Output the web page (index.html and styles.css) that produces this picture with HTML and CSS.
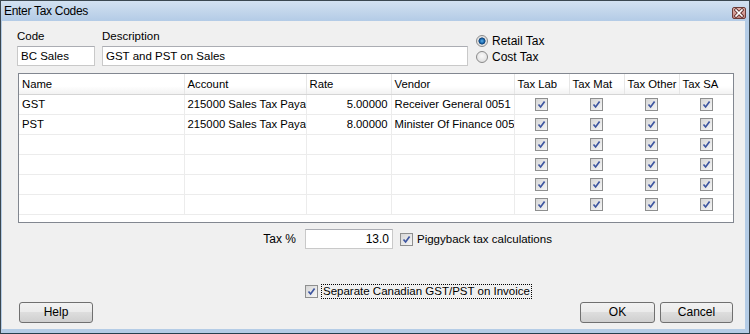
FILE: index.html
```html
<!DOCTYPE html>
<html lang="en">
<head>
    <meta charset="UTF-8">
    <title>Enter Tax Codes</title>
    <link rel="stylesheet" href="styles.css">
</head>
<body>

<div class="window">
    <div class="titlebar">
        <span class="title">Enter Tax Codes</span>
        <span class="close">
            <svg width="12" height="10" viewBox="0 0 12 10">
                <path d="M3 2 L9 8 M9 2 L3 8" stroke="#5a2a28" stroke-width="3.2" stroke-linecap="square"/>
                <path d="M3 2 L9 8 M9 2 L3 8" stroke="#ffffff" stroke-width="1.6" stroke-linecap="square"/>
            </svg>
        </span>
    </div>

    <div class="client">
        <!-- code / description / tax type -->
        <div class="top-row">
            <div class="field code">
                <div class="label">Code</div>
                <div class="input">BC Sales</div>
            </div>
            <div class="field desc">
                <div class="label">Description</div>
                <div class="input">GST and PST on Sales</div>
            </div>
            <div class="radios">
                <div class="radio-line"><span class="radio on"></span>Retail Tax</div>
                <div class="radio-line"><span class="radio"></span>Cost Tax</div>
            </div>
        </div>

        <!-- tax lines -->
        <div class="grid">
            <table>
                <colgroup>
                    <col class="c-name"><col class="c-acct"><col class="c-rate"><col class="c-vend">
                    <col class="c-chk"><col class="c-chk"><col class="c-chk"><col class="c-chk-last">
                </colgroup>
                <tr class="head">
                    <th>Name</th><th>Account</th><th>Rate</th><th>Vendor</th>
                    <th>Tax Lab</th><th>Tax Mat</th><th>Tax Other</th><th>Tax SA</th>
                </tr>
                <tr>
                    <td>GST</td><td>215000 Sales Tax Payable</td><td class="num">5.00000</td><td>Receiver General 0051</td>
                    <td class="cb"><span class="chk"><svg width="11" height="11" viewBox="0 0 11 11"><path d="M2.5 5.5 L4.6 8 L8.6 2.6" fill="none" stroke="#3d55a0" stroke-width="1.7"/></svg></span></td>
                    <td class="cb"><span class="chk"><svg width="11" height="11" viewBox="0 0 11 11"><path d="M2.5 5.5 L4.6 8 L8.6 2.6" fill="none" stroke="#3d55a0" stroke-width="1.7"/></svg></span></td>
                    <td class="cb"><span class="chk"><svg width="11" height="11" viewBox="0 0 11 11"><path d="M2.5 5.5 L4.6 8 L8.6 2.6" fill="none" stroke="#3d55a0" stroke-width="1.7"/></svg></span></td>
                    <td class="cb"><span class="chk"><svg width="11" height="11" viewBox="0 0 11 11"><path d="M2.5 5.5 L4.6 8 L8.6 2.6" fill="none" stroke="#3d55a0" stroke-width="1.7"/></svg></span></td>
                </tr>
                <tr>
                    <td>PST</td><td>215000 Sales Tax Payable</td><td class="num">8.00000</td><td>Minister Of Finance 0052</td>
                    <td class="cb"><span class="chk"><svg width="11" height="11" viewBox="0 0 11 11"><path d="M2.5 5.5 L4.6 8 L8.6 2.6" fill="none" stroke="#3d55a0" stroke-width="1.7"/></svg></span></td>
                    <td class="cb"><span class="chk"><svg width="11" height="11" viewBox="0 0 11 11"><path d="M2.5 5.5 L4.6 8 L8.6 2.6" fill="none" stroke="#3d55a0" stroke-width="1.7"/></svg></span></td>
                    <td class="cb"><span class="chk"><svg width="11" height="11" viewBox="0 0 11 11"><path d="M2.5 5.5 L4.6 8 L8.6 2.6" fill="none" stroke="#3d55a0" stroke-width="1.7"/></svg></span></td>
                    <td class="cb"><span class="chk"><svg width="11" height="11" viewBox="0 0 11 11"><path d="M2.5 5.5 L4.6 8 L8.6 2.6" fill="none" stroke="#3d55a0" stroke-width="1.7"/></svg></span></td>
                </tr>
                <tr>
                    <td></td><td></td><td class="num"></td><td></td>
                    <td class="cb"><span class="chk"><svg width="11" height="11" viewBox="0 0 11 11"><path d="M2.5 5.5 L4.6 8 L8.6 2.6" fill="none" stroke="#3d55a0" stroke-width="1.7"/></svg></span></td>
                    <td class="cb"><span class="chk"><svg width="11" height="11" viewBox="0 0 11 11"><path d="M2.5 5.5 L4.6 8 L8.6 2.6" fill="none" stroke="#3d55a0" stroke-width="1.7"/></svg></span></td>
                    <td class="cb"><span class="chk"><svg width="11" height="11" viewBox="0 0 11 11"><path d="M2.5 5.5 L4.6 8 L8.6 2.6" fill="none" stroke="#3d55a0" stroke-width="1.7"/></svg></span></td>
                    <td class="cb"><span class="chk"><svg width="11" height="11" viewBox="0 0 11 11"><path d="M2.5 5.5 L4.6 8 L8.6 2.6" fill="none" stroke="#3d55a0" stroke-width="1.7"/></svg></span></td>
                </tr>
                <tr>
                    <td></td><td></td><td class="num"></td><td></td>
                    <td class="cb"><span class="chk"><svg width="11" height="11" viewBox="0 0 11 11"><path d="M2.5 5.5 L4.6 8 L8.6 2.6" fill="none" stroke="#3d55a0" stroke-width="1.7"/></svg></span></td>
                    <td class="cb"><span class="chk"><svg width="11" height="11" viewBox="0 0 11 11"><path d="M2.5 5.5 L4.6 8 L8.6 2.6" fill="none" stroke="#3d55a0" stroke-width="1.7"/></svg></span></td>
                    <td class="cb"><span class="chk"><svg width="11" height="11" viewBox="0 0 11 11"><path d="M2.5 5.5 L4.6 8 L8.6 2.6" fill="none" stroke="#3d55a0" stroke-width="1.7"/></svg></span></td>
                    <td class="cb"><span class="chk"><svg width="11" height="11" viewBox="0 0 11 11"><path d="M2.5 5.5 L4.6 8 L8.6 2.6" fill="none" stroke="#3d55a0" stroke-width="1.7"/></svg></span></td>
                </tr>
                <tr>
                    <td></td><td></td><td class="num"></td><td></td>
                    <td class="cb"><span class="chk"><svg width="11" height="11" viewBox="0 0 11 11"><path d="M2.5 5.5 L4.6 8 L8.6 2.6" fill="none" stroke="#3d55a0" stroke-width="1.7"/></svg></span></td>
                    <td class="cb"><span class="chk"><svg width="11" height="11" viewBox="0 0 11 11"><path d="M2.5 5.5 L4.6 8 L8.6 2.6" fill="none" stroke="#3d55a0" stroke-width="1.7"/></svg></span></td>
                    <td class="cb"><span class="chk"><svg width="11" height="11" viewBox="0 0 11 11"><path d="M2.5 5.5 L4.6 8 L8.6 2.6" fill="none" stroke="#3d55a0" stroke-width="1.7"/></svg></span></td>
                    <td class="cb"><span class="chk"><svg width="11" height="11" viewBox="0 0 11 11"><path d="M2.5 5.5 L4.6 8 L8.6 2.6" fill="none" stroke="#3d55a0" stroke-width="1.7"/></svg></span></td>
                </tr>
                <tr>
                    <td></td><td></td><td class="num"></td><td></td>
                    <td class="cb"><span class="chk"><svg width="11" height="11" viewBox="0 0 11 11"><path d="M2.5 5.5 L4.6 8 L8.6 2.6" fill="none" stroke="#3d55a0" stroke-width="1.7"/></svg></span></td>
                    <td class="cb"><span class="chk"><svg width="11" height="11" viewBox="0 0 11 11"><path d="M2.5 5.5 L4.6 8 L8.6 2.6" fill="none" stroke="#3d55a0" stroke-width="1.7"/></svg></span></td>
                    <td class="cb"><span class="chk"><svg width="11" height="11" viewBox="0 0 11 11"><path d="M2.5 5.5 L4.6 8 L8.6 2.6" fill="none" stroke="#3d55a0" stroke-width="1.7"/></svg></span></td>
                    <td class="cb"><span class="chk"><svg width="11" height="11" viewBox="0 0 11 11"><path d="M2.5 5.5 L4.6 8 L8.6 2.6" fill="none" stroke="#3d55a0" stroke-width="1.7"/></svg></span></td>
                </tr>
            </table>
        </div>

        <!-- tax percent -->
        <div class="tax-row">
            <div class="tax-label">Tax %</div>
            <div class="input tax-input">13.0</div>
            <span class="chk"><svg width="11" height="11" viewBox="0 0 11 11"><path d="M2.5 5.5 L4.6 8 L8.6 2.6" fill="none" stroke="#3d55a0" stroke-width="1.7"/></svg></span>
            <span class="chk-text">Piggyback tax calculations</span>
        </div>

        <div class="sep-row">
            <span class="chk"><svg width="11" height="11" viewBox="0 0 11 11"><path d="M2.5 5.5 L4.6 8 L8.6 2.6" fill="none" stroke="#3d55a0" stroke-width="1.7"/></svg></span>
            <span class="chk-text focus">Separate Canadian GST/PST on Invoice</span>
        </div>

        <div class="buttons">
            <div class="button help">Help</div>
            <div class="spacer"></div>
            <div class="button ok">OK</div>
            <div class="button cancel">Cancel</div>
        </div>
    </div>
</div>

</body>
</html>
```

FILE: styles.css
```css
body {
    margin: 0;
    font-family: 'Liberation Sans', Arial, sans-serif;
    font-size: 11px;
    color: #000;
}

.window {
    width: 750px;
    height: 334px;
    box-sizing: border-box;
    border: 1px solid #3b4750;
    border-bottom-color: #27404e;
    background-color: #b4cce6;
    display: flex;
    flex-direction: column;
}

.titlebar {
    height: 20px;
    display: flex;
    align-items: center;
    background: linear-gradient(#d3e1f1, #b3cbe6);
}

.title {
    flex: 1;
    padding-left: 3px;
    font-size: 12px;
    letter-spacing: -0.3px;
    color: #000;
}

.close {
    width: 12px;
    height: 10px;
    margin-right: 3px;
    margin-top: 3px;
    border: 1px solid #6b3c38;
    border-radius: 2px;
    background: linear-gradient(#e3b3ad, #c4847d);
    display: flex;
}

.client {
    flex: 1;
    margin: 0 4px 4px 1px;
    background-color: #f0f0f0;
    display: flex;
    flex-direction: column;
}

.top-row {
    display: flex;
    padding: 8px 0 0 15px;
}

.field {
    display: flex;
    flex-direction: column;
}

.label {
    height: 14px;
    line-height: 14px;
    margin-bottom: 3px;
    font-size: 11.5px;
}

.input {
    box-sizing: border-box;
    height: 20px;
    line-height: 18px;
    padding: 0 3px;
    border: 1px solid #c9c9c9;
    border-top-color: #abadb3;
    background-color: #fff;
    white-space: nowrap;
    font-size: 11.5px;
}

.code .input {
    width: 78px;
}

.desc {
    margin-left: 7px;
}

.desc .input {
    width: 366px;
}

.radios {
    margin: 4px 0 0 8px;
}

.radio-line {
    height: 16px;
    display: flex;
    align-items: center;
    font-size: 12px;
}

.radio {
    box-sizing: border-box;
    width: 12px;
    height: 12px;
    margin-right: 4px;
    border-radius: 50%;
    border: 1px solid #8a8a8a;
    background: radial-gradient(circle at 50% 40%, #fafafa, #d8d8d8);
}

.radio.on {
    background: radial-gradient(circle, #5fb2ea 0, #1c6bb0 2px, #0d3f75 3.2px, #dcdcdc 3.8px, #f4f4f4 6px);
}

.grid {
    box-sizing: border-box;
    width: 716px;
    height: 150px;
    margin: 7px 0 0 16px;
    border: 1px solid #828790;
    background-color: #fff;
    overflow: hidden;
}

table {
    border-collapse: collapse;
    table-layout: fixed;
    width: 714px;
}

.c-name { width: 165px; }
.c-acct { width: 122px; }
.c-rate { width: 85px; }
.c-vend { width: 123px; }
.c-chk { width: 55px; }
.c-chk-last { width: 54px; }

tr {
    height: 20px;
}

th, td {
    box-sizing: border-box;
    padding: 0 3px;
    height: 20px;
    font-weight: normal;
    text-align: left;
    white-space: nowrap;
    overflow: hidden;
    border-bottom: 1px solid #ececec;
    font-size: 11.3px;
}

td {
    border-right: 1px solid #ececec;
}

td.cb {
    border-right: none;
    text-align: center;
    padding: 0;
}

.head th {
    background: linear-gradient(#ffffff 60%, #f2f2f2);
    border-bottom: 1px solid #d5d5d5;
    border-right: 1px solid #e6e6e6;
    font-size: 11.3px;
}

.head th:last-child {
    border-right: none;
}

.num {
    text-align: right;
}

.chk {
    box-sizing: border-box;
    width: 13px;
    height: 13px;
    display: inline-flex;
    align-items: center;
    justify-content: center;
    vertical-align: middle;
    border: 1px solid #8e8f8f;
    background: linear-gradient(135deg, #d6d6d6, #f6f6f6);
}

.tax-row {
    display: flex;
    align-items: center;
    margin-top: 6px;
    height: 20px;
    padding-left: 256px;
}

.tax-label {
    width: 38px;
    margin-right: 9px;
    text-align: right;
    font-size: 12px;
}

.tax-input {
    width: 88px;
    text-align: right;
    font-size: 12px;
    margin-right: 7px;
}

.chk-text {
    margin-left: 4px;
    font-size: 11.5px;
}

.sep-row {
    display: flex;
    align-items: center;
    height: 15px;
    margin-top: 35px;
    padding-left: 303px;
}

.focus {
    margin-left: 3px;
    padding: 0 1px;
    border: 1px dotted #000;
    line-height: 13px;
}

.buttons {
    display: flex;
    margin-top: 3px;
    padding: 0 12px 0 17px;
}

.spacer {
    flex: 1;
}

.button {
    box-sizing: border-box;
    height: 21px;
    line-height: 19px;
    text-align: center;
    font-size: 12px;
    border: 1px solid #707070;
    border-radius: 3px;
    background: linear-gradient(#f2f2f2 0, #ebebeb 45%, #dddddd 50%, #cfcfcf 100%);
}

.help { width: 74px; }
.ok { width: 75px; }
.cancel { width: 73px; margin-left: 5px; }
```
